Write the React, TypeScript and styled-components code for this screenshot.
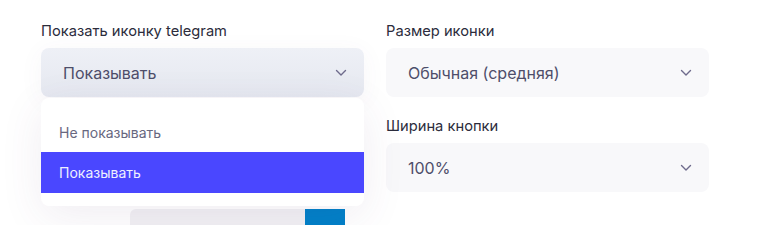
import styled, { createGlobalStyle } from "styled-components";

const GlobalStyle = createGlobalStyle`
  html, body {
    margin: 0;
    background: #ffffff;
  }
  body {
    font-family: Inter, "Noto Sans", sans-serif;
    -webkit-font-smoothing: antialiased;
  }
`;

const Page = styled.div`
  display: grid;
  grid-template-columns: 323px 323px;
  column-gap: 22px;
  padding: 21px 0 0 41px;
  height: 225px;
  box-sizing: border-box;
  overflow: hidden;
`;

const Column = styled.div`
  display: flex;
  flex-direction: column;
  gap: 19px;
`;

const Field = styled.div`
  display: flex;
  flex-direction: column;
  gap: 7px;
  position: relative;
`;

const Label = styled.label`
  font-size: 14.7px;
  line-height: 20px;
  font-weight: 400;
  color: #2c2c3c;
`;

const Select = styled.div<{ $open?: boolean }>`
  display: flex;
  align-items: center;
  justify-content: space-between;
  height: 49px;
  box-sizing: border-box;
  padding: 0 17px 0 22px;
  border-radius: 8px;
  background: ${(p) =>
    p.$open ? "linear-gradient(180deg, #eef0f6 0%, #e5e8f0 100%)" : "#f8f8fa"};
  box-shadow: ${(p) => (p.$open ? "0 4px 24px rgba(90, 70, 120, 0.05)" : "none")};
  font-size: 16px;
  color: #4e4e6a;
`;

const Chevron = () => (
  <svg width="12" height="8" viewBox="0 0 12 8" fill="none">
    <polyline points="1.5,1.5 6,6 10.5,1.5" stroke="#6e6b8c" strokeWidth="1.4" strokeLinecap="round" strokeLinejoin="round" />
  </svg>
);

const Dropdown = styled.ul`
  position: absolute;
  top: calc(100% + 1px);
  left: 0;
  right: 0;
  margin: 0;
  padding: 14px 0 13px;
  list-style: none;
  background: #ffffff;
  border-radius: 8px;
  box-shadow: 0 10px 44px rgba(90, 50, 110, 0.09);
  z-index: 2;
`;

const Option = styled.li<{ $active?: boolean }>`
  height: ${(p) => (p.$active ? "41px" : "40px")};
  display: flex;
  align-items: center;
  padding-left: 18px;
  font-size: 14px;
  background: ${(p) => (p.$active ? "#4a47ff" : "transparent")};
  color: ${(p) => (p.$active ? "#eef0ff" : "#686880")};
`;

const Preview = styled.div`
  display: flex;
  margin: 93px 19px 0 89px;
  height: 40px;
  border-radius: 6px 0 0 6px;
  background: #f2f1f4;
`;

const PreviewIcon = styled.div`
  margin-left: auto;
  width: 40px;
  background: #0080c8;
`;

export default function App() {
  return (
    <>
      <GlobalStyle />
      <Page>
        <Column>
          <Field>
            <Label>Показать иконку telegram</Label>
            <Select $open>
              <span>Показывать</span>
              <Chevron />
            </Select>
            <Dropdown>
              <Option>Не показывать</Option>
              <Option $active>Показывать</Option>
            </Dropdown>
          </Field>
          <Preview>
            <PreviewIcon />
          </Preview>
        </Column>
        <Column>
          <Field>
            <Label>Размер иконки</Label>
            <Select>
              <span>Обычная (средняя)</span>
              <Chevron />
            </Select>
          </Field>
          <Field>
            <Label>Ширина кнопки</Label>
            <Select>
              <span>100%</span>
              <Chevron />
            </Select>
          </Field>
        </Column>
      </Page>
    </>
  );
}
